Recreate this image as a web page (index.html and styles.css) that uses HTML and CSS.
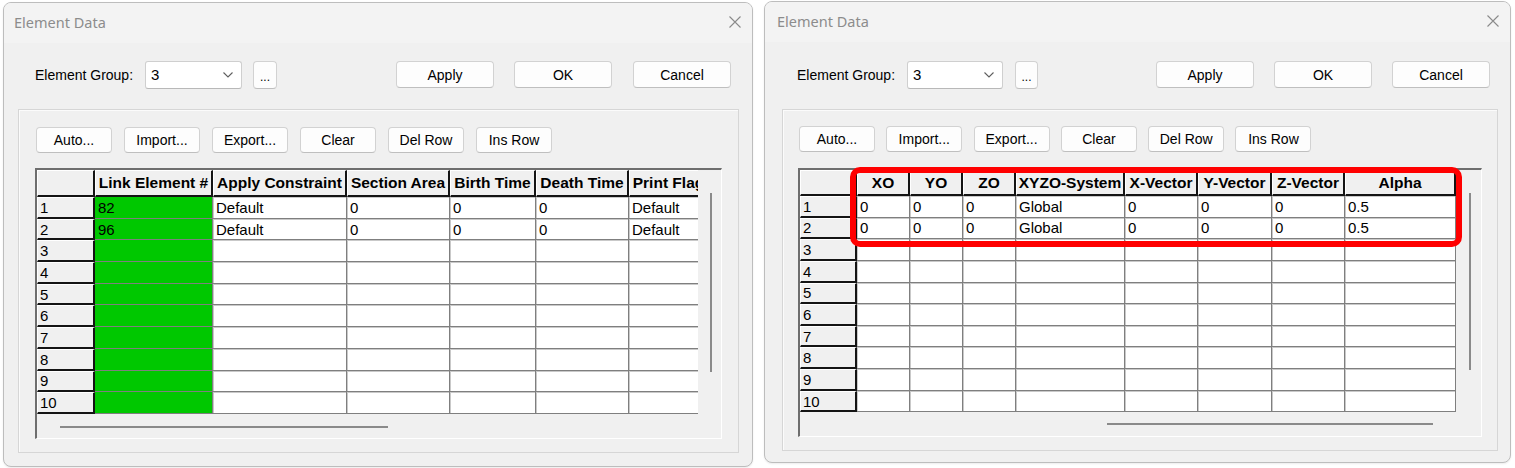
FILE: index.html
```html
<!DOCTYPE html>
<html lang="en">
<head>
<meta charset="utf-8">
<title>Element Data</title>
<link rel="stylesheet" href="styles.css">
</head>
<body>
<div class="desk">

  <section class="dialog dialog-a">
    <header class="titlebar">
      <span class="title">Element Data</span>
      <svg class="close" width="12" height="12" viewBox="0 0 12 12"><path d="M0.5 0.5L11.5 11.5M11.5 0.5L0.5 11.5" stroke="#8a8a8a" stroke-width="1.1" fill="none"/></svg>
    </header>
    <div class="toprow">
      <span class="label">Element Group:</span>
      <div class="combo"><span class="combo-val">3</span><svg class="chev" width="10" height="6" viewBox="0 0 10 6"><path d="M0.5 0.5L5 5L9.5 0.5" stroke="#606060" stroke-width="1.1" fill="none"/></svg></div>
      <button class="btn dots">...</button>
      <div class="spacer"></div>
      <button class="btn wide">Apply</button>
      <button class="btn wide ok">OK</button>
      <button class="btn wide cancel">Cancel</button>
    </div>
    <div class="panel">
      <div class="toolbar">
        <button class="btn tool">Auto...</button>
        <button class="btn tool">Import...</button>
        <button class="btn tool">Export...</button>
        <button class="btn tool">Clear</button>
        <button class="btn tool">Del Row</button>
        <button class="btn tool">Ins Row</button>
      </div>
      <div class="frame">
        <div class="table-wrap">
          <div class="grid grid-a">
            <div class="hd"></div><div class="hd">Link Element #</div><div class="hd">Apply Constraint</div><div class="hd">Section Area</div><div class="hd">Birth Time</div><div class="hd">Death Time</div><div class="hd">Print Flag</div>
            <div class="rh">1</div><div class="c g">82</div><div class="c">Default</div><div class="c">0</div><div class="c">0</div><div class="c">0</div><div class="c">Default</div>
            <div class="rh">2</div><div class="c g">96</div><div class="c">Default</div><div class="c">0</div><div class="c">0</div><div class="c">0</div><div class="c">Default</div>
            <div class="rh">3</div><div class="c g"></div><div class="c"></div><div class="c"></div><div class="c"></div><div class="c"></div><div class="c"></div>
            <div class="rh">4</div><div class="c g"></div><div class="c"></div><div class="c"></div><div class="c"></div><div class="c"></div><div class="c"></div>
            <div class="rh">5</div><div class="c g"></div><div class="c"></div><div class="c"></div><div class="c"></div><div class="c"></div><div class="c"></div>
            <div class="rh">6</div><div class="c g"></div><div class="c"></div><div class="c"></div><div class="c"></div><div class="c"></div><div class="c"></div>
            <div class="rh">7</div><div class="c g"></div><div class="c"></div><div class="c"></div><div class="c"></div><div class="c"></div><div class="c"></div>
            <div class="rh">8</div><div class="c g"></div><div class="c"></div><div class="c"></div><div class="c"></div><div class="c"></div><div class="c"></div>
            <div class="rh">9</div><div class="c g"></div><div class="c"></div><div class="c"></div><div class="c"></div><div class="c"></div><div class="c"></div>
            <div class="rh">10</div><div class="c g"></div><div class="c"></div><div class="c"></div><div class="c"></div><div class="c"></div><div class="c"></div>
          </div>
        </div>
        <div class="vscroll"><div class="vthumb"></div></div>
        <div class="hscroll"><div class="hthumb"></div></div>
      </div>
    </div>
  </section>

  <section class="dialog dialog-b">
    <header class="titlebar">
      <span class="title">Element Data</span>
      <svg class="close" width="12" height="12" viewBox="0 0 12 12"><path d="M0.5 0.5L11.5 11.5M11.5 0.5L0.5 11.5" stroke="#8a8a8a" stroke-width="1.1" fill="none"/></svg>
    </header>
    <div class="toprow">
      <span class="label">Element Group:</span>
      <div class="combo"><span class="combo-val">3</span><svg class="chev" width="10" height="6" viewBox="0 0 10 6"><path d="M0.5 0.5L5 5L9.5 0.5" stroke="#606060" stroke-width="1.1" fill="none"/></svg></div>
      <button class="btn dots">...</button>
      <div class="spacer"></div>
      <button class="btn wide">Apply</button>
      <button class="btn wide ok">OK</button>
      <button class="btn wide cancel">Cancel</button>
    </div>
    <div class="panel">
      <div class="toolbar">
        <button class="btn tool">Auto...</button>
        <button class="btn tool">Import...</button>
        <button class="btn tool">Export...</button>
        <button class="btn tool">Clear</button>
        <button class="btn tool">Del Row</button>
        <button class="btn tool">Ins Row</button>
      </div>
      <div class="frame">
        <div class="table-wrap">
          <div class="grid grid-b">
            <div class="hd"></div><div class="hd">XO</div><div class="hd">YO</div><div class="hd">ZO</div><div class="hd">XYZO-System</div><div class="hd">X-Vector</div><div class="hd">Y-Vector</div><div class="hd">Z-Vector</div><div class="hd">Alpha</div>
            <div class="rh">1</div><div class="c">0</div><div class="c">0</div><div class="c">0</div><div class="c">Global</div><div class="c">0</div><div class="c">0</div><div class="c">0</div><div class="c">0.5</div>
            <div class="rh">2</div><div class="c">0</div><div class="c">0</div><div class="c">0</div><div class="c">Global</div><div class="c">0</div><div class="c">0</div><div class="c">0</div><div class="c">0.5</div>
            <div class="rh">3</div><div class="c"></div><div class="c"></div><div class="c"></div><div class="c"></div><div class="c"></div><div class="c"></div><div class="c"></div><div class="c"></div>
            <div class="rh">4</div><div class="c"></div><div class="c"></div><div class="c"></div><div class="c"></div><div class="c"></div><div class="c"></div><div class="c"></div><div class="c"></div>
            <div class="rh">5</div><div class="c"></div><div class="c"></div><div class="c"></div><div class="c"></div><div class="c"></div><div class="c"></div><div class="c"></div><div class="c"></div>
            <div class="rh">6</div><div class="c"></div><div class="c"></div><div class="c"></div><div class="c"></div><div class="c"></div><div class="c"></div><div class="c"></div><div class="c"></div>
            <div class="rh">7</div><div class="c"></div><div class="c"></div><div class="c"></div><div class="c"></div><div class="c"></div><div class="c"></div><div class="c"></div><div class="c"></div>
            <div class="rh">8</div><div class="c"></div><div class="c"></div><div class="c"></div><div class="c"></div><div class="c"></div><div class="c"></div><div class="c"></div><div class="c"></div>
            <div class="rh">9</div><div class="c"></div><div class="c"></div><div class="c"></div><div class="c"></div><div class="c"></div><div class="c"></div><div class="c"></div><div class="c"></div>
            <div class="rh">10</div><div class="c"></div><div class="c"></div><div class="c"></div><div class="c"></div><div class="c"></div><div class="c"></div><div class="c"></div><div class="c"></div>
          </div>
        </div>
        <div class="vscroll"><div class="vthumb"></div></div>
        <div class="hscroll"><div class="hthumb"></div></div>
        <div class="highlight"></div>
      </div>
    </div>
  </section>

</div>
</body>
</html>
```

FILE: styles.css
```css
* { box-sizing: border-box; }

html, body {
  margin: 0;
  padding: 0;
  background: #ffffff;
}

body {
  font-family: "Liberation Sans", Arial, sans-serif;
  color: #000;
}

.desk {
  display: flex;
  align-items: flex-start;
  width: 1515px;
  height: 468px;
}

/* ---------- dialog shell ---------- */
.dialog {
  display: flex;
  flex-direction: column;
  background: #f0f0f0;
  border: 1px solid #bdbdbd;
  border-radius: 8px;
  overflow: hidden;
  box-shadow: 0 1px 2px rgba(0,0,0,0.08);
}

.dialog-a {
  margin: 2px 0 0 3px;
  width: 750px;
  height: 465px;
}

.dialog-b {
  margin: 1px 0 0 11px;
  width: 747px;
  height: 462px;
}

.titlebar {
  flex: none;
  height: 40px;
  display: flex;
  align-items: center;
  justify-content: space-between;
  background: #f3f3f3;
  padding: 0 11px 0 10px;
}

.dialog-b .titlebar { padding: 0 11px 0 12px; }

.title {
  font-family: "Noto Sans", "Open Sans", sans-serif;
  font-size: 14.5px;
  color: #8c8c8c;
  margin-top: -2px;
}

.close { display: block; margin-top: -2px; }

/* ---------- top row ---------- */
.toprow {
  flex: none;
  display: flex;
  align-items: center;
  height: 29px;
  margin-top: 17px;
  padding: 0 21px 0 31px;
}

.dialog-b .toprow {
  margin-top: 18px;
  padding: 0 20px 0 32px;
}

.label {
  width: 110px;
  font-size: 14px;
  white-space: nowrap;
}

.combo {
  width: 97px;
  height: 28px;
  background: #fff;
  border: 1px solid #cfcfcf;
  border-bottom-color: #b8b8b8;
  border-radius: 3px;
  display: flex;
  align-items: center;
  justify-content: space-between;
  padding: 0 8px 0 5px;
  font-size: 15px;
  margin-right: 11px;
}

.dialog-b .combo { width: 96px; margin-right: 12px; }

.chev { display: block; margin-top: 1px; }

.btn {
  font-family: "Liberation Sans", Arial, sans-serif;
  font-size: 14px;
  color: #000;
  background: #fdfdfd;
  border: 1px solid #d2d2d2;
  border-bottom-color: #bfbfbf;
  border-radius: 4px;
  padding: 0;
  margin: 0;
}

.dots {
  width: 24px;
  height: 28px;
  font-size: 12px;
  padding-top: 4px;
}

.dialog-b .dots { width: 23px; }

.spacer { flex: 1; }

.wide { width: 98px; height: 27px; }
.ok { margin-left: 20px; }
.cancel { margin-left: 21px; }

.dialog-b .wide:first-of-type { width: 97px; }
.dialog-b .cancel { margin-left: 20px; }

/* ---------- panel ---------- */
.panel {
  flex: 1;
  display: flex;
  flex-direction: column;
  margin: 20px 13px 13px 14px;
  border: 1px solid #d6d6d6;
  box-shadow: inset 1px 1px 0 #fbfbfb;
  padding: 17px 16px 13px 16px;
}

.dialog-b .panel {
  margin: 20px 12px 11px 17px;
  padding: 16px 15px 13px 15px;
}

.toolbar {
  flex: none;
  display: flex;
  gap: 12px;
  margin-left: 1px;
}

.dialog-b .toolbar { gap: 11.3px; }

.tool { width: 76px; height: 26px; }

/* ---------- grid frame ---------- */
.frame {
  flex: 1;
  position: relative;
  margin-top: 15px;
  background: #f0f0f0;
  border-top: 2px solid #6e6e6e;
  border-left: 2px solid #6e6e6e;
  border-right: 1px solid #ffffff;
  border-bottom: 1px solid #ffffff;
  display: grid;
  grid-template-columns: 1fr 23px;
  grid-template-rows: 1fr 24px;
}

.dialog-b .frame {
  margin-top: 16px;
  grid-template-columns: 1fr 25px;
}

.table-wrap {
  overflow: hidden;
  min-width: 0;
  min-height: 0;
}

.grid {
  display: grid;
  font-family: "Liberation Sans", Arial, sans-serif;
}

.grid-a {
  grid-template-columns: 58px 118px 134px 103px 86px 93px 80px;
  grid-template-rows: 27px repeat(10, 21.7px);
  width: 672px;
}

.grid-b {
  grid-template-columns: 57px 53px 53px 53px 109px 73px 74px 73px 111px;
  grid-template-rows: 26px repeat(10, 21.65px);
  width: 656px;
}

.grid > div {
  display: flex;
  align-items: center;
  overflow: hidden;
  white-space: nowrap;
}

.hd {
  background: #f0f0f0;
  border-top: 1px solid #ffffff;
  border-left: 1px solid #ffffff;
  border-right: 2px solid #141414;
  border-bottom: 2px solid #141414;
  font-weight: bold;
  font-size: 15.5px;
  justify-content: center;
}

.rh {
  background: #f0f0f0;
  border-top: 1px solid #ffffff;
  border-left: 1px solid #ffffff;
  border-right: 2px solid #141414;
  border-bottom: 2px solid #141414;
  font-size: 15px;
  padding-left: 2px;
}

.c {
  background: #ffffff;
  border-right: 1px solid #7f7f7f;
  border-bottom: 1px solid #7f7f7f;
  box-shadow: inset 1px 1px 0 #c9c9c9;
  font-size: 15px;
  padding-left: 3px;
}

.c.g {
  background: #00c800;
  box-shadow: none;
}

/* ---------- scroll strips ---------- */
.vscroll {
  background: #f0f0f0;
}

.vthumb {
  width: 2px;
  height: 179px;
  margin: 23px 0 0 12px;
  background: #8a8a8a;
}

.dialog-b .vthumb {
  height: 177px;
  margin: 23px 0 0 13px;
}

.hscroll {
  grid-column: 1 / -1;
  background: #f0f0f0;
}

.hthumb {
  height: 2px;
  width: 328px;
  margin: 12px 0 0 23px;
  background: #8a8a8a;
}

.dialog-b .hthumb {
  width: 326px;
  margin: 11px 0 0 307px;
}

/* ---------- red annotation ---------- */
.highlight {
  position: absolute;
  left: 50px;
  top: -3px;
  width: 612px;
  height: 80px;
  border: 6.5px solid #ff0000;
  border-radius: 10px;
  pointer-events: none;
}
```
